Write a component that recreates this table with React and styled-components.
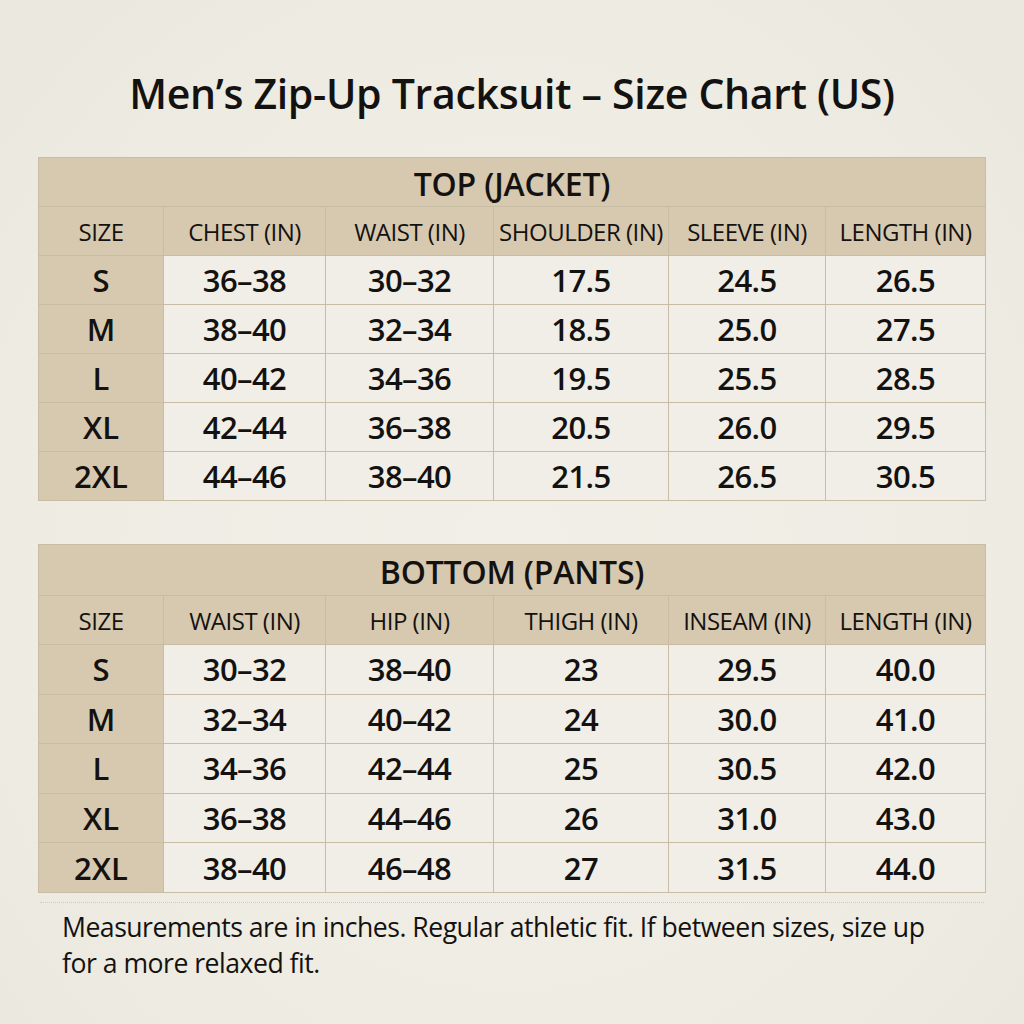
import React from "react";
import styled, { createGlobalStyle } from "styled-components";

const Global = createGlobalStyle`
  html, body { margin: 0; padding: 0; }
  body {
    width: 1024px;
    height: 1024px;
    overflow: hidden;
    background: radial-gradient(ellipse at 50% 55%, #f1efe7 0%, #eeece3 60%, #e9e7de 100%);
    font-family: "Open Sans", "Noto Sans", sans-serif;
    color: #141210;
  }
`;

const Page = styled.div`
  width: 1024px;
  height: 1024px;
  box-sizing: border-box;
  padding: 66px 38px 0 38px;
  display: flex;
  flex-direction: column;
`;

const Title = styled.h1`
  margin: 0 0 36px 0;
  height: 55px;
  line-height: 55px;
  text-align: center;
  font-size: 41px;
  font-weight: 600;
  letter-spacing: -0.3px;
  white-space: nowrap;
`;

const Grid = styled.div`
  display: grid;
  grid-template-columns: 124px 161px 167px 174px 156px 1fr;
  gap: 1px;
  padding: 1px;
  background: #c9bca4;
  margin-bottom: ${(p) => p.$mb || 0}px;
`;

const Caption = styled.div`
  grid-column: 1 / -1;
  background: #d7c9af;
  height: ${(p) => p.$h}px;
  display: flex;
  align-items: center;
  justify-content: center;
  font-size: 32px;
  font-weight: 600;
  letter-spacing: -0.2px;
  padding-top: 2px;
  box-sizing: border-box;
`;

const Head = styled.div`
  background: #d7c9af;
  height: 48px;
  display: flex;
  align-items: center;
  justify-content: center;
  font-size: 24px;
  font-weight: 500;
  letter-spacing: -0.5px;
  white-space: nowrap;
`;

const SizeCell = styled.div`
  background: #d7c9af;
  height: ${(p) => p.$h}px;
  display: flex;
  align-items: center;
  justify-content: center;
  font-size: 31px;
  font-weight: 600;
`;

const Cell = styled.div`
  background: #f0eee7;
  height: ${(p) => p.$h}px;
  display: flex;
  align-items: center;
  justify-content: center;
  font-size: 31px;
  font-weight: 600;
  letter-spacing: -0.6px;
`;

const Divider = styled.div`
  margin: 9px 2px 0 2px;
  border-top: 1px dotted #d3cbbb;
`;

const Note = styled.p`
  margin: 6px 0 0 24px;
  font-size: 26.6px;
  line-height: 36px;
  font-weight: 400;
  width: 890px;
  letter-spacing: -0.5px;
`;

const top = {
  caption: "TOP (JACKET)",
  headers: ["SIZE", "CHEST (IN)", "WAIST (IN)", "SHOULDER (IN)", "SLEEVE (IN)", "LENGTH (IN)"],
  rows: [
    ["S", "36–38", "30–32", "17.5", "24.5", "26.5"],
    ["M", "38–40", "32–34", "18.5", "25.0", "27.5"],
    ["L", "40–42", "34–36", "19.5", "25.5", "28.5"],
    ["XL", "42–44", "36–38", "20.5", "26.0", "29.5"],
    ["2XL", "44–46", "38–40", "21.5", "26.5", "30.5"],
  ],
};

const bottom = {
  caption: "BOTTOM (PANTS)",
  headers: ["SIZE", "WAIST (IN)", "HIP (IN)", "THIGH (IN)", "INSEAM (IN)", "LENGTH (IN)"],
  rows: [
    ["S", "30–32", "38–40", "23", "29.5", "40.0"],
    ["M", "32–34", "40–42", "24", "30.0", "41.0"],
    ["L", "34–36", "42–44", "25", "30.5", "42.0"],
    ["XL", "36–38", "44–46", "26", "31.0", "43.0"],
    ["2XL", "38–40", "46–48", "27", "31.5", "44.0"],
  ],
};

function SizeTable({ data, capH, rowH, mb }) {
  return (
    <Grid $mb={mb}>
      <Caption $h={capH}>{data.caption}</Caption>
      {data.headers.map((h) => (
        <Head key={h}>{h}</Head>
      ))}
      {data.rows.map((r) =>
        r.map((v, i) =>
          i === 0 ? (
            <SizeCell key={r[0] + i} $h={rowH}>{v}</SizeCell>
          ) : (
            <Cell key={r[0] + i} $h={rowH}>{v}</Cell>
          )
        )
      )}
    </Grid>
  );
}

export default function App() {
  return (
    <>
      <Global />
      <Page>
        <Title>Men’s Zip-Up Tracksuit – Size Chart (US)</Title>
        <SizeTable data={top} capH={48} rowH={48} mb={43} />
        <SizeTable data={bottom} capH={50} rowH={48.6} />
        <Divider />
        <Note>
          Measurements are in inches. Regular athletic fit. If between sizes, size up for a more relaxed fit.
        </Note>
      </Page>
    </>
  );
}
